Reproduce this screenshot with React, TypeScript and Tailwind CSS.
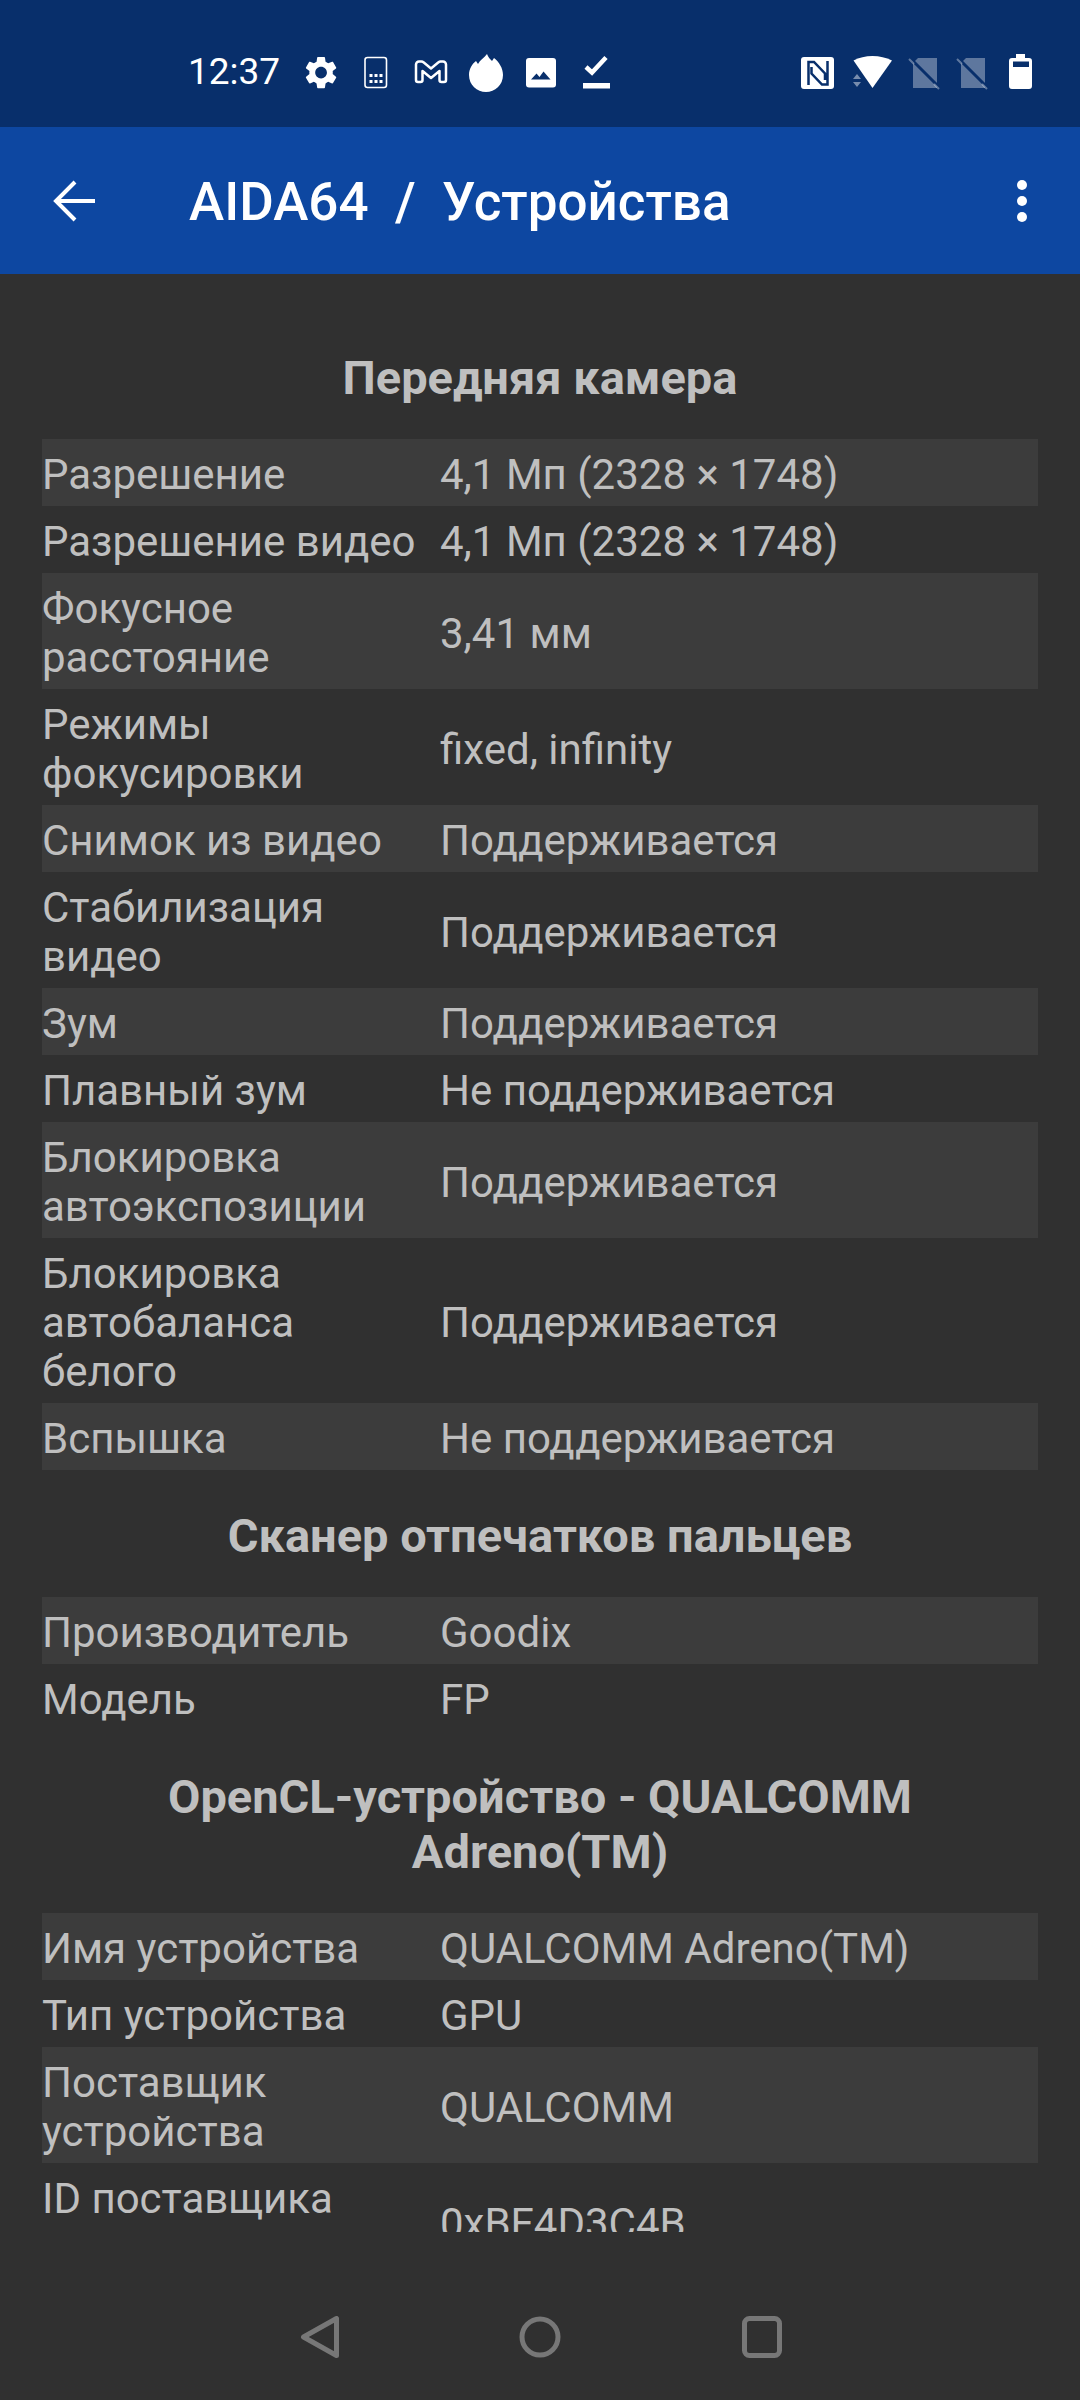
import React from "react";

type Row = [string, string];

const camera: Row[] = [
  ["Разрешение", "4,1 Мп (2328 × 1748)"],
  ["Разрешение видео", "4,1 Мп (2328 × 1748)"],
  ["Фокусное расстояние", "3,41 мм"],
  ["Режимы фокусировки", "fixed, infinity"],
  ["Снимок из видео", "Поддерживается"],
  ["Стабилизация видео", "Поддерживается"],
  ["Зум", "Поддерживается"],
  ["Плавный зум", "Не поддерживается"],
  ["Блокировка автоэкспозиции", "Поддерживается"],
  ["Блокировка автобаланса белого", "Поддерживается"],
  ["Вспышка", "Не поддерживается"],
];
const scanner: Row[] = [
  ["Производитель", "Goodix"],
  ["Модель", "FP"],
];
const opencl: Row[] = [
  ["Имя устройства", "QUALCOMM Adreno(TM)"],
  ["Тип устройства", "GPU"],
  ["Поставщик устройства", "QUALCOMM"],
  ["ID поставщика устройства", "0xBF4D3C4B"],
];

function Table({ rows }: { rows: Row[] }) {
  return (
    <div className="flex flex-col">
      {rows.map((r, i) => (
        <div key={r[0]} className={`flex items-center pt-[11px] pb-[7px] ${i % 2 === 0 ? "bg-[#3c3c3c]" : ""}`}>
          <div className="w-[398px] shrink-0 pr-[10px]">{r[0]}</div>
          <div className="flex-1">{r[1]}</div>
        </div>
      ))}
    </div>
  );
}

function Heading({ children }: { children: React.ReactNode }) {
  return <div className="text-center font-bold text-[47px] leading-[55px] px-[60px] pt-[38px] pb-[34px]">{children}</div>;
}

function StatusIcons() {
  return (
    <svg width="1080" height="127" viewBox="0 0 1080 127" className="absolute left-0 top-0" fill="#fff">
      {/* gear */}
      <g transform="translate(301.5 53) scale(1.63)">
        <path d="M19.14 12.94c.04-.3.06-.61.06-.94 0-.32-.02-.64-.07-.94l2.03-1.58c.18-.14.23-.41.12-.61l-1.92-3.32c-.12-.22-.37-.29-.59-.22l-2.39.96c-.5-.38-1.03-.7-1.62-.94l-.36-2.54c-.04-.24-.24-.41-.48-.41h-3.84c-.24 0-.43.17-.47.41l-.36 2.54c-.59.24-1.13.57-1.62.94l-2.39-.96c-.22-.08-.47 0-.59.22L2.74 8.87c-.12.21-.08.47.12.61l2.03 1.58c-.05.3-.09.63-.09.94s.02.64.07.94l-2.03 1.58c-.18.14-.23.41-.12.61l1.92 3.32c.12.22.37.29.59.22l2.39-.96c.5.38 1.03.7 1.62.94l.36 2.54c.05.24.24.41.48.41h3.84c.24 0 .44-.17.47-.41l.36-2.54c.59-.24 1.13-.56 1.62-.94l2.39.96c.22.08.47 0 .59-.22l1.92-3.32c.12-.22.07-.47-.12-.61l-2.01-1.58zM12 15.6c-1.98 0-3.6-1.62-3.6-3.6s1.62-3.6 3.6-3.6 3.6 1.62 3.6 3.6-1.62 3.6-3.6 3.6z" />
      </g>
      {/* phone with dots */}
      <rect x="365" y="57.500" width="21.500" height="30" rx="2.500" fill="none" stroke="#fff" strokeWidth="1.600" />
      {[369.5, 374.5, 379.5].map((x) => (
        <g key={x}>
          <rect x={x} y="74" width="3" height="3" />
          <rect x={x} y="80" width="3" height="3" />
        </g>
      ))}
      {/* M outline */}
      <path d="M419 61.500h2.500a3 3 0 0 1 2 .8l7.500 6.200 7.500-6.200a3 3 0 0 1 2-.8h2.500a3 3 0 0 1 3 3v15.500a2 2 0 0 1-2 2h-2.500a2 2 0 0 1-2-2v-9l-8.500 7-8.500-7v9a2 2 0 0 1-2 2h-2.500a2 2 0 0 1-2-2v-15.500a3 3 0 0 1 3-3z" fill="none" stroke="#fff" strokeWidth="2.500" strokeLinejoin="round" />
      {/* flame */}
      <path d="M487 54C488 57 490 59 492 61L494 58C499 62 503 68 503 75C503 85 495 92 486 92C477 92 469 85 469 75C469 69 472 64 476 61L478 64C480 60 484 58 487 54Z" />
      {/* image */}
      <rect x="526" y="58" width="30" height="29.500" rx="3" />
      <path d="M531 79.500l5.500-6 3 3.500 4-5.500 7 8z" fill="#082f6b" />
      {/* check */}
      <path d="M586 67l6 5.500 14-15" fill="none" stroke="#fff" strokeWidth="4.500" />
      <rect x="583" y="83" width="27" height="5.500" />
      {/* nfc */}
      <rect x="801" y="57" width="33" height="32" rx="3" />
      <path d="M808.500 85V62H814L825 73.500V80M827.500 61V84.500H822L811.500 73.500V67" fill="none" stroke="#082f6b" strokeWidth="2.500" />
      {/* wifi */}
      <path d="M853.500 60.500C859 57.500 865.500 56 872.500 56s13.500 1.500 19.500 4.500L872.500 88z" />
      <path d="M857 74l4 5h-8zM857 87l-4-5h8z" opacity="0.45" />
      {/* SIMs */}
      {[0, 48].map((d) => (
        <g key={d} transform={`translate(${d} 0)`}>
          <path d="M918 58h19v30h-24V63z" opacity="0.35" />
          <path d="M912 60l27 27" stroke="#082f6b" strokeWidth="3" />
          <path d="M909 59l5 5M934 84l5 5" stroke="#fff" strokeWidth="2" opacity="0.35" />
        </g>
      ))}
      {/* battery */}
      <path fillRule="evenodd" d="M1016 54h9v4h4a3 3 0 0 1 3 3v25a3 3 0 0 1-3 3h-17a3 3 0 0 1-3-3V61a3 3 0 0 1 3-3h4zm-3 7.500v5.500h16v-5.500z" />
    </svg>
  );
}

export default function App() {
  return (
    <div
      className="relative w-[1080px] h-[2400px] overflow-hidden flex flex-col bg-[#303030] text-[#bfbfbf] text-[42px] leading-[49px]"
      style={{ fontFamily: "Roboto, 'Noto Sans', sans-serif" }}
    >
      <div className="relative h-[127px] shrink-0 bg-[#082f6b] text-white text-[37px] leading-[44px]">
        <div className="absolute left-[188px] top-[50px]">12:37</div>
        <StatusIcons />
      </div>
      <div className="h-[147px] shrink-0 bg-[#0d47a1] text-white flex items-center relative">
        <svg width="44" height="44" viewBox="0 0 44 44" className="ml-[52px] shrink-0" fill="none" stroke="#fff" strokeWidth="4">
          <path d="M43 22H5M23 3L4 22l19 19" />
        </svg>
        <div className="ml-[93px] mt-[3px] font-medium text-[53px] leading-[62px] whitespace-pre">AIDA64  /  Устройства</div>
        <svg width="10" height="42" viewBox="0 0 10 42" className="ml-auto mr-[53px]" fill="#fff">
          <circle cx="5" cy="5" r="5" />
          <circle cx="5" cy="21" r="5" />
          <circle cx="5" cy="37" r="5" />
        </svg>
      </div>
      <div className="flex-1 min-h-0 overflow-hidden px-[42px] pt-[38px]">
        <Heading>Передняя камера</Heading>
        <Table rows={camera} />
        <Heading>Сканер отпечатков пальцев</Heading>
        <Table rows={scanner} />
        <Heading>OpenCL-устройство - QUALCOMM Adreno(TM)</Heading>
        <Table rows={opencl} />
      </div>
      <div className="h-[168px] shrink-0 flex items-start justify-center pt-[84px]">
        <svg width="500" height="42" viewBox="0 0 500 42" fill="none" stroke="#777" strokeWidth="5" strokeLinejoin="round">
          <path d="M46.500 2.500v37L13.500 21z" />
          <circle cx="250" cy="21" r="18" />
          <rect x="454.500" y="2.500" width="35" height="37" rx="5" />
        </svg>
      </div>
    </div>
  );
}
